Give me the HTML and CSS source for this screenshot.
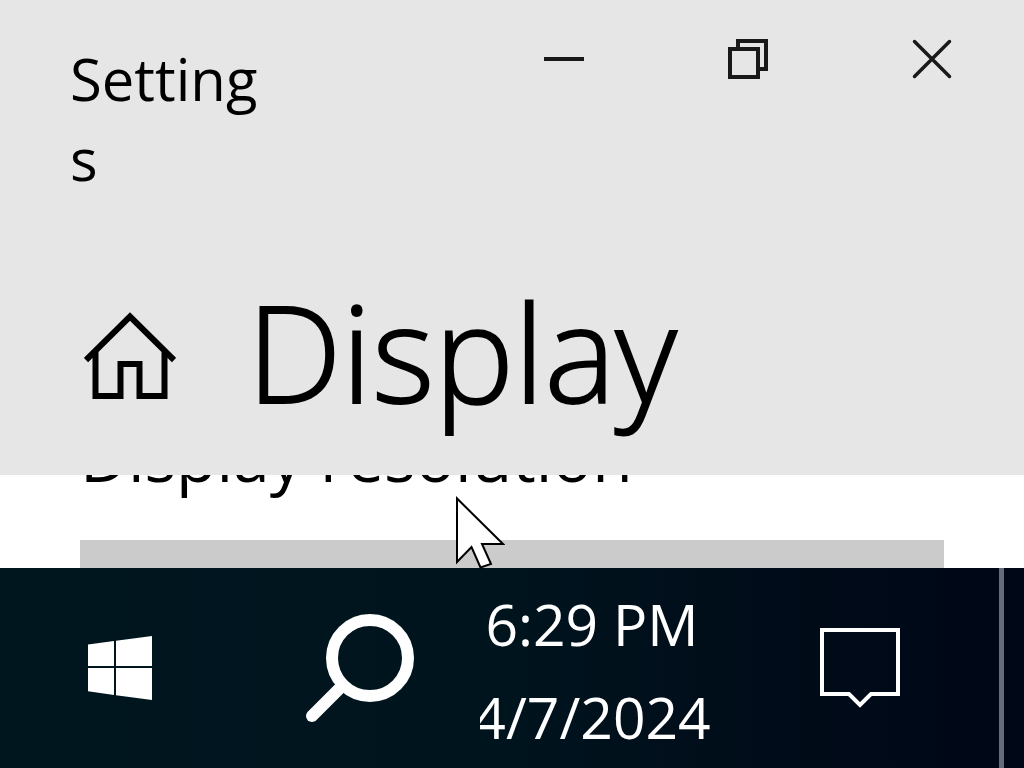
FILE: index.html
```html
<!DOCTYPE html>
<html lang="en">
<head>
  <meta charset="UTF-8">
  <meta name="viewport" content="width=device-width, initial-scale=1.0">
  <link rel="stylesheet" href="styles.css">
  <title>Settings</title>
</head>
<body>
  <header class="window-header">
    <div class="title-bar">
      <span class="app-title">Settings</span>
      <div class="window-controls">
        <button class="control" aria-label="Minimize">
          <svg width="40" height="40" viewBox="0 0 40 40"><path d="M0 20H40"/></svg>
        </button>
        <button class="control" aria-label="Restore">
          <svg width="40" height="40" viewBox="0 0 40 40"><path d="M2 10H30V38H2ZM10 10V2H38V30H30"/></svg>
        </button>
        <button class="control" aria-label="Close">
          <svg width="40" height="40" viewBox="0 0 40 40"><path class="cross" d="M2.5 2.5L37.5 37.5M37.5 2.5L2.5 37.5"/></svg>
        </button>
      </div>
    </div>
    <div class="page-heading">
      <a class="home" href="#" aria-label="Home">
        <svg width="92" height="88" viewBox="0 0 92 88">
          <path d="M2 48L46 4.5L90 48M11.5 40V84H36.5V52H55.5V84H80.5V40"/>
        </svg>
      </a>
      <h1>Display</h1>
    </div>
  </header>

  <main class="content">
    <div class="setting">
      <label for="resolution">Display resolution</label>
      <select id="resolution"></select>
    </div>
  </main>

  <footer class="taskbar">
    <button class="task" aria-label="Start">
      <svg width="64" height="64" viewBox="0 0 64 64">
        <path fill="#fff" d="M0 8.4L26 5V30H0ZM28 4.7L64 0V30H28ZM0 32H26V59L0 55.2ZM28 32H64V64L28 59.3Z"/>
      </svg>
    </button>
    <button class="task" aria-label="Search">
      <svg width="108" height="108" viewBox="0 0 108 108" fill="none" stroke="#fff" stroke-width="12">
        <circle cx="64" cy="44" r="38"/>
        <path d="M6 102L37 71" stroke-linecap="round"/>
      </svg>
    </button>
    <button class="task clock">
      <span>6:29 PM</span>
      <span>4/7/2024</span>
    </button>
    <button class="task" aria-label="Notifications">
      <svg width="80" height="80" viewBox="0 0 80 80" fill="none" stroke="#fff" stroke-width="4">
        <path d="M2 2H78V66H51L40 77L29 66H2Z"/>
      </svg>
    </button>
    <button class="show-desktop" aria-label="Show desktop"></button>
  </footer>

  <svg class="cursor" width="50" height="74" viewBox="0 0 50 74">
    <path d="M2 2.5V66L16.5 51L25.5 71.5L36 68L27 48H48Z"/>
  </svg>
</body>
</html>
```
FILE: styles.css
```css
* {
  box-sizing: border-box;
}

body {
  margin: 0;
  height: 100vh;
  display: flex;
  flex-direction: column;
  overflow: hidden;
  background-color: #fff;
  color: #000;
  font-family: "Open Sans", "Noto Sans", sans-serif;
}

button {
  padding: 0;
  border: none;
  background: none;
  color: inherit;
  font: inherit;
}

svg {
  display: block;
}

.window-header {
  background-color: #e6e6e6;
  padding-bottom: 24px;
}

.title-bar {
  display: flex;
  justify-content: space-between;
  align-items: flex-start;
}

.app-title {
  width: 272px;
  padding: 39px 0 0 70px;
  font-size: 58px;
  line-height: 80px;
  overflow-wrap: anywhere;
}

.window-controls {
  display: flex;
}

.control {
  width: 184px;
  height: 118px;
  display: flex;
  justify-content: center;
  align-items: center;
}

.control path {
  fill: none;
  stroke: #191919;
  stroke-width: 4;
}

.control .cross {
  stroke-width: 3.5;
  stroke-linecap: round;
}

.page-heading {
  display: flex;
  align-items: center;
  gap: 71px;
  margin-top: 52px;
  padding-left: 84px;
}

.home {
  padding-top: 10px;
}

.home path {
  fill: none;
  stroke: #000;
  stroke-width: 6;
}

h1 {
  margin: 0;
  font-size: 134px;
  font-weight: 300;
  line-height: 200px;
  -webkit-text-stroke: 2px #000;
}

.content {
  flex: 1;
  min-height: 0;
  overflow: hidden;
  padding: 0 80px;
}

/* scrolled up under the header */
.setting {
  display: flex;
  flex-direction: column;
  gap: 44px;
  margin-top: -59px;
}

.setting label {
  font-size: 66px;
  line-height: 80px;
}

.setting select {
  height: 120px;
  border: none;
  background-color: #cbcbcb;
  appearance: none;
}

.taskbar {
  height: 200px;
  display: grid;
  grid-template-columns: 240fr 240fr 240fr 279fr 25px;
  background: linear-gradient(to right, #00161f, #00141e 50%, #000c19 75%, #000716);
  color: #fff;
}

.task {
  display: flex;
  justify-content: center;
  align-items: center;
  min-width: 0;
}

.clock {
  flex-direction: column;
  overflow: hidden;
  padding: 6px 16px 0 0;
  font-size: 57px;
  line-height: 93px;
}

.show-desktop {
  border-left: 5px solid #646c7a;
}

.cursor {
  position: absolute;
  left: 455px;
  top: 496px;
}

.cursor path {
  fill: #fff;
  stroke: #000;
  stroke-width: 2;
}
```
